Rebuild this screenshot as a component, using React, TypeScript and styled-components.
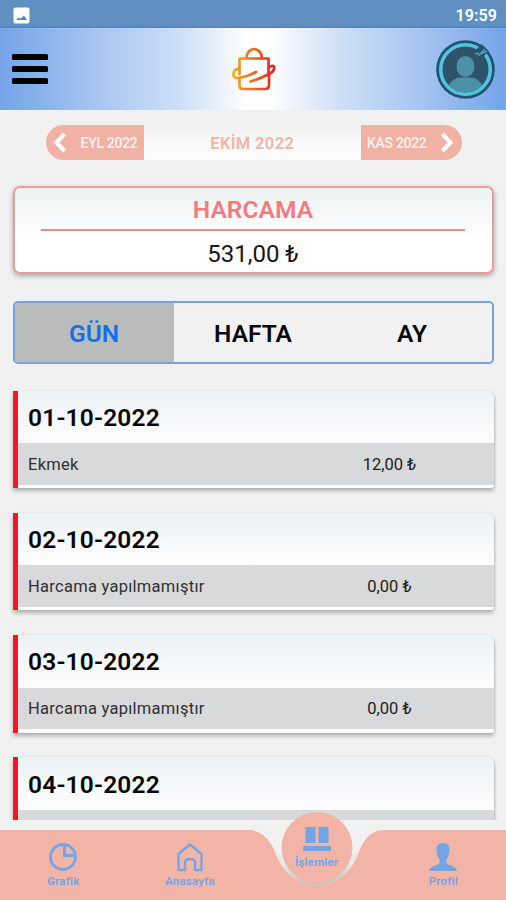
import React from "react";
import styled, { createGlobalStyle } from "styled-components";

const GlobalStyle = createGlobalStyle`
  * { box-sizing: border-box; }
  html, body { margin: 0; padding: 0; background: #f1f1f1; }
  body { font-family: Roboto, "Noto Sans", sans-serif; overflow: hidden; }
  button { font-family: inherit; border: 0; padding: 0; background: none; }
`;

const Screen = styled.div`
  width: 506px;
  height: 900px;
  display: flex;
  flex-direction: column;
  background: #f1f1f1;
  overflow: hidden;
`;

const StatusBar = styled.div`
  height: 28px;
  flex: none;
  display: flex;
  align-items: center;
  justify-content: space-between;
  padding: 2px 9px 0 13px;
  background: linear-gradient(#628fc1 92%, #4580b9);
  color: #fff;
  font-size: 16px;
  font-weight: 600;
  letter-spacing: 0.1px;
`;

const Header = styled.header`
  height: 82px;
  flex: none;
  display: grid;
  grid-template-columns: 1fr 44px 1fr;
  align-items: center;
  padding: 0 11px 0 12px;
  background: linear-gradient(90deg, #75a4e9 0%, #a9c7f1 20%, #cfe0f7 36%, #fff 49%, #fff 53%, #cfe0f7 67%, #a9c7f1 82%, #75a4e9 100%);
`;

const MenuButton = styled.button`
  display: flex;
  flex-direction: column;
  gap: 6px;
  width: 36px;
`;

const MenuLine = styled.span`
  height: 6px;
  border-radius: 1.5px;
  background: #000;
`;

const Avatar = styled.svg`
  justify-self: end;
`;

const Content = styled.main`
  height: 710px;
  flex: none;
  overflow: hidden;
  padding: 15px 12px 0 13px;
`;

const MonthPicker = styled.div`
  display: grid;
  grid-template-columns: 97.5px 217.5px 100.5px;
  width: 415.5px;
  height: 35px;
  margin-left: 33px;
  border-radius: 18px;
  overflow: hidden;
`;

const MonthStep = styled.button<{ $side: "prev" | "next" }>`
  display: flex;
  align-items: center;
  justify-content: space-between;
  padding: ${(p) => (p.$side === "prev" ? "0 6px 0 6px" : "0 7px 0 6px")};
  background: #f1b1a4;
  color: #fff3ef;
  font-size: 14px;
  font-weight: 500;
  letter-spacing: ${(p) => (p.$side === "prev" ? "-0.3px" : "-0.3px")};
  white-space: nowrap;
`;

const CurrentMonth = styled.div`
  display: flex;
  align-items: center;
  justify-content: center;
  padding: 1px 0 0 0;
  background: linear-gradient(#f0f0f0, #fafafa 55%, #fcfcfc);
  color: #f4b3a4;
  font-size: 16.5px;
  font-weight: 600;
  letter-spacing: 0.35px;
`;

const Summary = styled.section`
  height: 88px;
  margin-top: 26px;
  padding: 8px 27px 0 26px;
  border: 2px solid #eb9b9b;
  border-radius: 7px;
  background: linear-gradient(#edf2f3, #fff 58%);
  box-shadow: 0 2px 5px rgba(0, 0, 0, 0.32);
  text-align: center;
`;

const SummaryTitle = styled.h1`
  margin: 0;
  height: 35px;
  padding-top: 1px;
  border-bottom: 2px solid #ee8b8d;
  color: #f27b82;
  font-size: 24.5px;
  line-height: 26px;
  font-weight: 600;
  letter-spacing: 0.1px;
`;

const SummaryAmount = styled.div`
  padding-top: 9px;
  color: #171717;
  font-size: 24px;
  line-height: 28px;
`;

const Tabs = styled.div`
  display: grid;
  grid-template-columns: 159px 159px 1fr;
  height: 63px;
  margin-top: 27px;
  border: 2px solid #74a3e5;
  border-radius: 5px;
  overflow: hidden;
`;

const Tab = styled.button<{ $active?: boolean }>`
  padding: 2px 1px 0 0;
  background: ${(p) => (p.$active ? "#babcbb" : "transparent")};
  color: ${(p) => (p.$active ? "#166fe9" : "#090909")};
  font-size: 24.5px;
  font-weight: 600;
`;

const DayList = styled.div`
  display: flex;
  flex-direction: column;
  gap: 24.8px;
  margin-top: 26.6px;
`;

const DayCard = styled.article`
  flex: none;
  height: 97.5px;
  border-left: 5px solid #fa1420;
  border-radius: 0 7px 3px 0;
  background: #fff;
  box-shadow: 0 3px 4px rgba(0, 0, 0, 0.27), 1px 0 2px rgba(0, 0, 0, 0.08);
`;

const DayTitle = styled.h2`
  margin: 0;
  height: 52.5px;
  padding: 13.3px 0 0 10px;
  border-radius: 0 7px 0 0;
  background: linear-gradient(#edf2f4, #fcfdfe);
  color: #080808;
  font-size: 24.5px;
  line-height: 28px;
  font-weight: 600;
  letter-spacing: 0.2px;
`;

const Expense = styled.div`
  display: grid;
  grid-template-columns: 1fr 209px;
  align-items: center;
  height: 41.5px;
  padding: 1px 0 0 10px;
  background: #d8d9da;
  color: #303132;
  font-size: 16.5px;
  letter-spacing: 0.27px;
`;

const Amount = styled.span`
  color: #202020;
  text-align: center;
  letter-spacing: 0;
`;

const BottomBar = styled.nav`
  position: relative;
  height: 80px;
  flex: none;
  display: grid;
  grid-template-columns: repeat(4, 126.67px);
  background: #f1f1f1;
`;

const BarShape = styled.svg`
  position: absolute;
  left: 0;
  top: -12px;
`;

const NavItem = styled.button<{ $raised?: boolean }>`
  position: relative;
  display: flex;
  flex-direction: column;
  align-items: center;
  padding-top: ${(p) => (p.$raised ? "6px" : "22px")};
  color: #72a5e8;
`;

const NavLabel = styled.span<{ $raised?: boolean }>`
  font-size: 11.5px;
  line-height: 14px;
  font-weight: 600;
  letter-spacing: 0.2px;
  margin-top: ${(p) => (p.$raised ? "3px" : "2px")};
`;

const days = [
  { date: "01-10-2022", label: "Ekmek", amount: "12,00 ₺" },
  { date: "02-10-2022", label: "Harcama yapılmamıştır", amount: "0,00 ₺" },
  { date: "03-10-2022", label: "Harcama yapılmamıştır", amount: "0,00 ₺" },
  { date: "04-10-2022", label: "", amount: "" },
];

const PictureIcon = () => (
  <svg width="17" height="17" viewBox="0 0 17 17">
    <rect x="0.5" y="0.5" width="16" height="16" rx="2" fill="#fff" />
    <path d="M3 13l2.5-2.5 2 1.2L11 8.5l3 4.5z" fill="#5584b7" />
  </svg>
);

const Chevron = ({ flip = false }: { flip?: boolean }) => (
  <svg width="16" height="22" viewBox="0 0 16 22">
    <path
      d={flip ? "M3.5 2L11.5 10.500l-8 8.500" : "M12.500 2l-8 8.500 8 8.500"}
      fill="none"
      stroke="#fff"
      strokeWidth="4.2"
    />
  </svg>
);

const BagLogo = () => (
  <svg width="44" height="44" viewBox="0 0 44 44" fill="none" stroke="url(#bag)" strokeWidth="2.7" strokeLinecap="round" strokeLinejoin="round">
    <defs>
      <linearGradient id="bag" gradientUnits="userSpaceOnUse" x1="0" y1="0" x2="44" y2="0">
        <stop offset="0" stopColor="#edb321" />
        <stop offset="0.5" stopColor="#ed671f" />
        <stop offset="1" stopColor="#e91822" />
      </linearGradient>
    </defs>
    <path d="M14.5 11C15 -1 29 -1 30 11" />
    <path d="M7.5 27V11.5H36.5V28" />
    <path d="M7.5 31V38.5Q7.5 42 11 42H33.500Q37 42 37 38V28" />
    <path d="M7 21L2.5 23.5Q-.5 30.5 5 31Q14 30.5 24 25" />
    <path d="M18.5 34.5Q30 31 38 26.5Q43 24 42 19.5Q40 18 37 20.5" />
  </svg>
);

const ProfileAvatar = () => (
  <Avatar width="59" height="59" viewBox="0 0 59 59">
    <defs><clipPath id="face"><circle cx="29.5" cy="29.5" r="23" /></clipPath></defs>
    <circle cx="29.5" cy="29.5" r="29.3" fill="#24516e" />
    <circle cx="29.5" cy="29.5" r="24.8" fill="#30536c" stroke="#51c5df" strokeWidth="3.6" />
    <g clipPath="url(#face)" fill="#4d91a8">
      <ellipse cx="29.5" cy="26.5" rx="9" ry="10.5" />
      <path d="M12 55V47Q16 37.5 25 37.5H34Q43 37.5 47 47V55z" />
    </g>
    <path d="M43 7L50 14" stroke="#24516e" strokeWidth="8" />
    <path d="M39 14l4-1M42 16l7-7M45 14l6-3" stroke="#4d9eb5" strokeWidth="1.5" />
  </Avatar>
);

const ChartIcon = () => (
  <svg width="30" height="30" viewBox="0 0 30 30" fill="none" stroke="currentColor" strokeWidth="2.8">
    <circle cx="15" cy="15" r="12.5" />
    <path d="M16.5 3V13.5H27" />
  </svg>
);

const HomeIcon = () => (
  <svg width="30" height="30" viewBox="0 0 30 30" fill="none" stroke="currentColor" strokeWidth="2.3" strokeLinejoin="round">
    <path d="M3.5 28V12L15 2.5 26.5 12V28H20V20.5Q20 17 15 17Q10 17 10 20.5V28z" />
  </svg>
);

const ActionsIcon = () => (
  <svg width="30" height="26" viewBox="0 0 30 26" fill="currentColor">
    <path d="M3.5 1h10v16h-10zM16.5 1h10v16h-10zM1 20h28v5H1z" />
  </svg>
);

const PersonIcon = () => (
  <svg width="30" height="30" viewBox="0 0 30 30" fill="currentColor">
    <path d="M15 1c-5 0-7 3-6.500 8 .3 4 1.500 6.500 3 8.500.5 2 .3 4-1.500 5-4 1.500-8 2.500-9 6.500h28c-1-4-5-5-9-6.500-1.800-1-2-3-1.500-5 1.500-2 2.700-4.500 3-8.500.5-5-1.500-8-6.500-8z" />
  </svg>
);

const BarBackground = () => (
  <BarShape width="506" height="92" viewBox="0 808 506 92">
    <defs>
      <linearGradient id="rim" gradientUnits="userSpaceOnUse" x1="0" y1="812" x2="0" y2="886">
        <stop offset="0" stopColor="#ecefed" />
        <stop offset="0.7" stopColor="#e8eae4" />
        <stop offset="1" stopColor="#b9bdb7" />
      </linearGradient>
    </defs>
    <path d="M0 830H251C263 832 271 841 275 852C283 873 297 884.5 317 884.5S351 873 359 852C363 841 370 830 384 830H506V900H0z" fill="#f2b4a7" />
    <path d="M276 854C284 874 298 884.5 317 884.5S350 874 358 854z" fill="url(#rim)" />
    <circle cx="317" cy="847.5" r="35.5" fill="#f2b4a7" />
  </BarShape>
);

export default function App() {
  return (
    <>
      <GlobalStyle />
      <Screen>
        <StatusBar><PictureIcon /><span>19:59</span></StatusBar>
        <Header>
          <MenuButton aria-label="Menü"><MenuLine /><MenuLine /><MenuLine /></MenuButton>
          <BagLogo />
          <ProfileAvatar />
        </Header>
        <Content>
          <MonthPicker>
            <MonthStep $side="prev"><Chevron />EYL 2022</MonthStep>
            <CurrentMonth>EKİM 2022</CurrentMonth>
            <MonthStep $side="next">KAS 2022<Chevron flip /></MonthStep>
          </MonthPicker>
          <Summary>
            <SummaryTitle>HARCAMA</SummaryTitle>
            <SummaryAmount>531,00 ₺</SummaryAmount>
          </Summary>
          <Tabs>
            <Tab $active>GÜN</Tab><Tab>HAFTA</Tab><Tab>AY</Tab>
          </Tabs>
          <DayList>
            {days.map((day) => (
              <DayCard key={day.date}>
                <DayTitle>{day.date}</DayTitle>
                <Expense><span>{day.label}</span><Amount>{day.amount}</Amount></Expense>
              </DayCard>
            ))}
          </DayList>
        </Content>
        <BottomBar>
          <BarBackground />
          <NavItem><ChartIcon /><NavLabel>Grafik</NavLabel></NavItem>
          <NavItem><HomeIcon /><NavLabel>Anasayfa</NavLabel></NavItem>
          <NavItem $raised><ActionsIcon /><NavLabel $raised>İşlemler</NavLabel></NavItem>
          <NavItem><PersonIcon /><NavLabel>Profil</NavLabel></NavItem>
        </BottomBar>
      </Screen>
    </>
  );
}
